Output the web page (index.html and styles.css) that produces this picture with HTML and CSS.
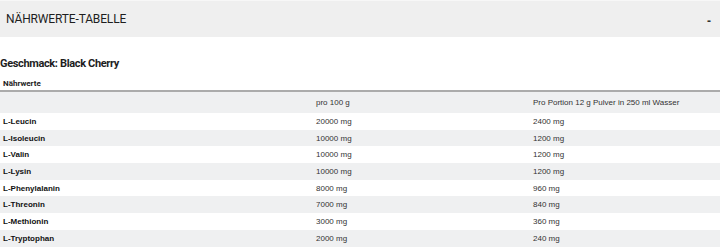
FILE: index.html
```html
<!DOCTYPE html>
<html lang="de">
<head>
<meta charset="utf-8">
<link rel="stylesheet" href="styles.css">
</head>
<body>
<div class="acc-head">
  <span class="acc-title">NÄHRWERTE-TABELLE</span>
  <span class="acc-toggle">-</span>
</div>
<div class="acc-body">
  <h3 class="flavor">Geschmack: Black Cherry</h3>
  <div class="table-label">Nährwerte</div>
  <table class="nutri">
    <colgroup><col class="c1"><col class="c2"><col class="c3"></colgroup>
    <thead>
      <tr><th></th><th>pro 100 g</th><th>Pro Portion 12 g Pulver in 250 ml Wasser</th></tr>
    </thead>
    <tbody>
      <tr><td>L-Leucin</td><td>20000 mg</td><td>2400 mg</td></tr>
      <tr><td>L-Isoleucin</td><td>10000 mg</td><td>1200 mg</td></tr>
      <tr><td>L-Valin</td><td>10000 mg</td><td>1200 mg</td></tr>
      <tr><td>L-Lysin</td><td>10000 mg</td><td>1200 mg</td></tr>
      <tr><td>L-Phenylalanin</td><td>8000 mg</td><td>960 mg</td></tr>
      <tr><td>L-Threonin</td><td>7000 mg</td><td>840 mg</td></tr>
      <tr><td>L-Methionin</td><td>3000 mg</td><td>360 mg</td></tr>
      <tr><td>L-Tryptophan</td><td>2000 mg</td><td>240 mg</td></tr>
    </tbody>
  </table>
</div>
</body>
</html>
```
FILE: styles.css
```css
html, body {
  margin: 0;
  padding: 0;
  background: #ffffff;
}
body {
  font-family: "Liberation Sans", Arial, sans-serif;
  color: #222;
  overflow: hidden;
}
.acc-head {
  display: flex;
  justify-content: space-between;
  align-items: center;
  height: 36px;
  border-top: 1px solid #f7f7f7;
  background: #efefef;
  padding: 0 9px 0 6px;
}
.acc-title {
  font-family: Roboto, "Noto Sans", sans-serif;
  font-size: 12px;
  color: #1e1e1e;
  letter-spacing: -0.15px;
}
.acc-toggle {
  font-family: "Liberation Sans", Arial, sans-serif;
  font-weight: bold;
  font-size: 12px;
  color: #333;
  padding-top: 4px;
}
.acc-body {
  padding-top: 20px;
}
.flavor {
  margin: 0;
  font-family: Roboto, "Noto Sans", sans-serif;
  font-weight: bold;
  font-size: 11px;
  line-height: 14px;
  letter-spacing: -0.35px;
  color: #1e1e1e;
}
.table-label {
  font-family: Roboto, "Noto Sans", sans-serif;
  font-weight: bold;
  font-size: 8px;
  line-height: 12px;
  padding: 7px 3px 0;
  color: #1e1e1e;
}
.nutri {
  width: 100%;
  border-collapse: collapse;
  table-layout: fixed;
  border-top: 2px solid #ababab;
  font-size: 8px;
  color: #333;
}
.c1 { width: 313px; }
.c2 { width: 217px; }
.nutri th {
  text-align: left;
  font-weight: normal;
  height: 21px;
  padding: 0 3px;
  background: #eff0f1;
}
.nutri td {
  height: 16.7px;
  padding: 0 3px;
}
.nutri td:first-child {
  font-weight: bold;
  color: #111;
}
.nutri tbody tr:nth-child(even) td {
  background: #eff0f1;
}
```
